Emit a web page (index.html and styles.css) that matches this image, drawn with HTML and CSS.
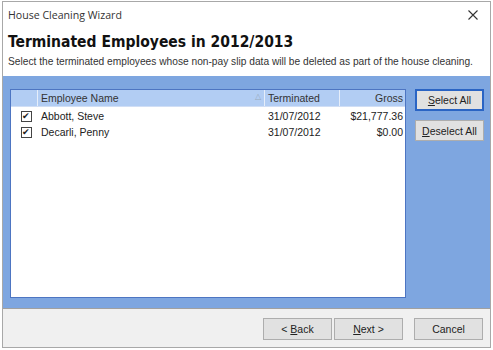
FILE: index.html
```html
<!DOCTYPE html>
<html>
<head>
<meta charset="utf-8">
<link rel="stylesheet" href="styles.css">
</head>
<body>
<div class="window">
  <div class="titlebar">
    <span class="title">House Cleaning Wizard</span>
    <svg class="close" width="10" height="10" viewBox="0 0 10 10"><path d="M0.5 0.5L9.5 9.5M9.5 0.5L0.5 9.5" stroke="#333" stroke-width="1.1"/></svg>
  </div>
  <div class="header">
    <h1 class="heading">Terminated Employees in 2012/2013</h1>
    <p class="subtitle">Select the terminated employees whose non-pay slip data will be deleted as part of the house cleaning.</p>
  </div>
  <div class="panel">
    <div class="list">
      <div class="row head">
        <div class="c-check"></div>
        <div class="c-name">Employee Name<span class="sort">&#9651;</span></div>
        <div class="c-term">Terminated</div>
        <div class="c-gross">Gross</div>
      </div>
      <div class="row">
        <div class="c-check"><span class="cb">&#10004;</span></div>
        <div class="c-name">Abbott, Steve</div>
        <div class="c-term">31/07/2012</div>
        <div class="c-gross">$21,777.36</div>
      </div>
      <div class="row">
        <div class="c-check"><span class="cb">&#10004;</span></div>
        <div class="c-name">Decarli, Penny</div>
        <div class="c-term">31/07/2012</div>
        <div class="c-gross">$0.00</div>
      </div>
    </div>
    <div class="side">
      <button class="btn default"><u>S</u>elect All</button>
      <button class="btn"><u>D</u>eselect All</button>
    </div>
  </div>
  <div class="footer">
    <button class="btn">&lt; <u>B</u>ack</button>
    <button class="btn"><u>N</u>ext &gt;</button>
    <button class="btn cancel">Cancel</button>
  </div>
</div>
</body>
</html>
```
FILE: styles.css
```css
* { box-sizing: border-box; }
html, body { margin: 0; padding: 0; background: #fff; }
body { font-family: "Liberation Sans", Arial, sans-serif; color: #222; }
.window {
  margin: 1px 0 0 2px;
  width: 489px;
  height: 347px;
  border: 1px solid #a8a8a8;
  display: flex;
  flex-direction: column;
  background: #fff;
}
.titlebar {
  height: 26px;
  display: flex;
  align-items: center;
  justify-content: space-between;
  padding: 0 12px 0 5px;
}
.title { font-family: "Open Sans", sans-serif; font-size: 10.6px; color: #333; }
.close { display: block; }
.header { padding: 0 0 0 5px; height: 48px; }
.heading {
  margin: 4px 0 0 0;
  font-family: "DejaVu Sans Condensed", "DejaVu Sans", sans-serif;
  font-stretch: condensed;
  font-weight: bold;
  font-size: 15.5px;
  line-height: 20px;
  color: #111;
}
.subtitle { margin: 3px 0 0 0; font-size: 10.2px; line-height: 14px; color: #333; }
.panel {
  flex: 1;
  background: #7ea6e0;
  display: flex;
  padding: 13px 5px 10px 7px;
  gap: 9px;
}
.list {
  flex: 1;
  background: #fff;
  border: 1px solid #4d75c2;
  font-size: 10.5px;
}
.row { display: flex; height: 16px; align-items: center; }
.row.head { height: 17px; background: #b2cdf3; border-bottom: 1px solid #d0def5; margin-bottom: 1px; color: #333; }
.c-check { width: 27px; height: 100%; display: flex; align-items: center; justify-content: center; padding-left: 3px; }
.c-name { width: 227px; padding-left: 3px; position: relative; height: 100%; display: flex; align-items: center; }
.c-term { width: 75px; padding-left: 3px; height: 100%; display: flex; align-items: center; }
.c-gross { flex: 1; text-align: right; padding-right: 2px; height: 100%; display: flex; align-items: center; justify-content: flex-end; }
.head .c-check, .head .c-name, .head .c-term { border-right: 1px solid #e6eefa; }
.sort { position: absolute; right: 3px; top: 2px; font-size: 8px; color: #9ab; }
.cb {
  width: 11px; height: 11px;
  border: 1px solid #444;
  background: #fff;
  font-size: 9px; line-height: 9px;
  text-align: center;
  color: #222;
  display: block;
}
.side { width: 70px; display: flex; flex-direction: column; gap: 9px; padding-top: 0; }
.btn {
  width: 69px; height: 21px;
  background: #e1e1e1;
  border: 1px solid #adadad;
  font-family: "Liberation Sans", Arial, sans-serif;
  font-size: 10.5px;
  color: #222;
  padding: 0;
}
.btn.default { border: 2px solid #2a64c4; height: 22px; }
.footer {
  height: 39px;
  border-top: 1px solid #a0a0a0;
  background: #f0f0f0;
  display: flex;
  justify-content: flex-end;
  padding: 9px 7px 0 0;
  gap: 2px;
}
.footer .btn { height: 22px; }
.footer .cancel { margin-left: 9px; }
```
